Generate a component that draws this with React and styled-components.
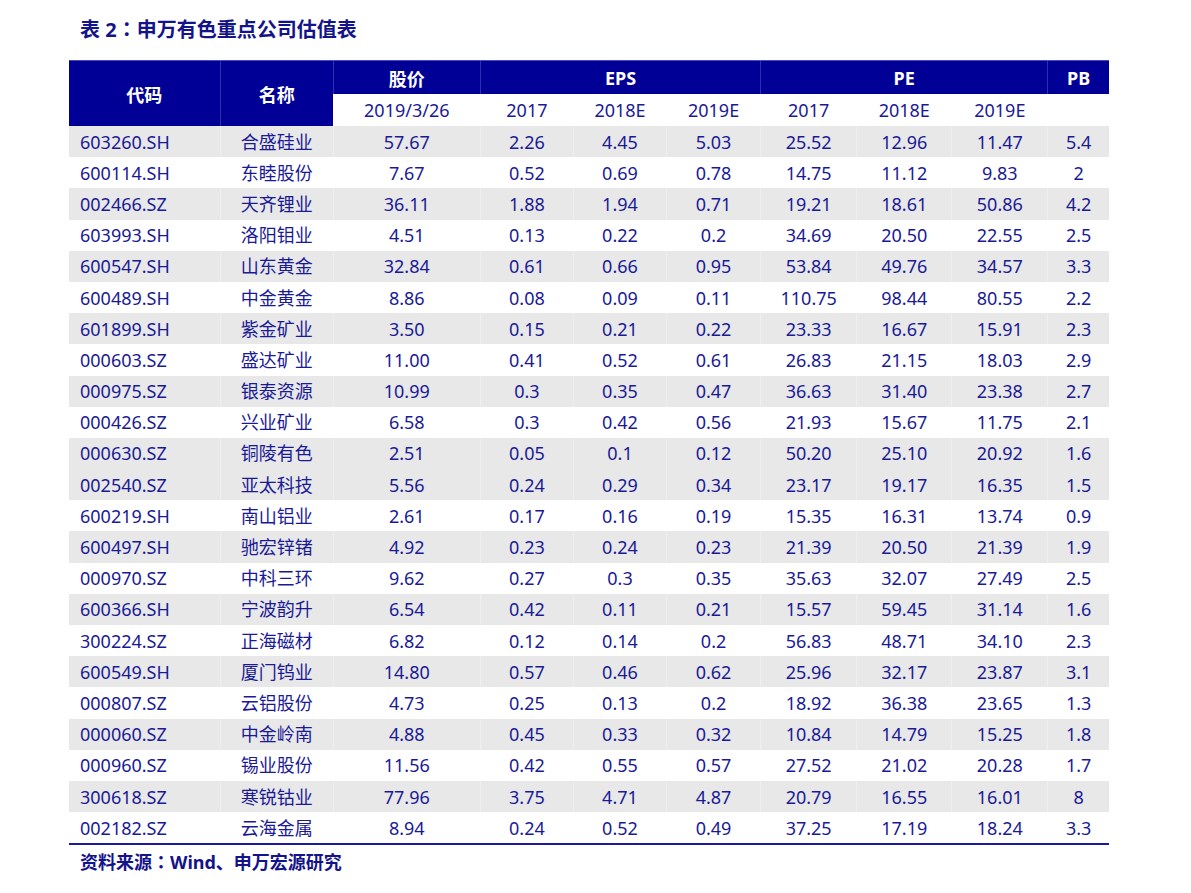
import React from 'react';
import styled, { createGlobalStyle } from 'styled-components';

const GlobalStyle = createGlobalStyle`
  html, body {
    margin: 0;
    padding: 0;
    background: #ffffff;
  }
  body {
    font-family: "Noto Sans", "Noto Sans CJK SC", sans-serif;
  }
`;

const rows = [
  ['603260.SH', '合盛硅业', '57.67', '2.26', '4.45', '5.03', '25.52', '12.96', '11.47', '5.4'],
  ['600114.SH', '东睦股份', '7.67', '0.52', '0.69', '0.78', '14.75', '11.12', '9.83', '2'],
  ['002466.SZ', '天齐锂业', '36.11', '1.88', '1.94', '0.71', '19.21', '18.61', '50.86', '4.2'],
  ['603993.SH', '洛阳钼业', '4.51', '0.13', '0.22', '0.2', '34.69', '20.50', '22.55', '2.5'],
  ['600547.SH', '山东黄金', '32.84', '0.61', '0.66', '0.95', '53.84', '49.76', '34.57', '3.3'],
  ['600489.SH', '中金黄金', '8.86', '0.08', '0.09', '0.11', '110.75', '98.44', '80.55', '2.2'],
  ['601899.SH', '紫金矿业', '3.50', '0.15', '0.21', '0.22', '23.33', '16.67', '15.91', '2.3'],
  ['000603.SZ', '盛达矿业', '11.00', '0.41', '0.52', '0.61', '26.83', '21.15', '18.03', '2.9'],
  ['000975.SZ', '银泰资源', '10.99', '0.3', '0.35', '0.47', '36.63', '31.40', '23.38', '2.7'],
  ['000426.SZ', '兴业矿业', '6.58', '0.3', '0.42', '0.56', '21.93', '15.67', '11.75', '2.1'],
  ['000630.SZ', '铜陵有色', '2.51', '0.05', '0.1', '0.12', '50.20', '25.10', '20.92', '1.6'],
  ['002540.SZ', '亚太科技', '5.56', '0.24', '0.29', '0.34', '23.17', '19.17', '16.35', '1.5'],
  ['600219.SH', '南山铝业', '2.61', '0.17', '0.16', '0.19', '15.35', '16.31', '13.74', '0.9'],
  ['600497.SH', '驰宏锌锗', '4.92', '0.23', '0.24', '0.23', '21.39', '20.50', '21.39', '1.9'],
  ['000970.SZ', '中科三环', '9.62', '0.27', '0.3', '0.35', '35.63', '32.07', '27.49', '2.5'],
  ['600366.SH', '宁波韵升', '6.54', '0.42', '0.11', '0.21', '15.57', '59.45', '31.14', '1.6'],
  ['300224.SZ', '正海磁材', '6.82', '0.12', '0.14', '0.2', '56.83', '48.71', '34.10', '2.3'],
  ['600549.SH', '厦门钨业', '14.80', '0.57', '0.46', '0.62', '25.96', '32.17', '23.87', '3.1'],
  ['000807.SZ', '云铝股份', '4.73', '0.25', '0.13', '0.2', '18.92', '36.38', '23.65', '1.3'],
  ['000060.SZ', '中金岭南', '4.88', '0.45', '0.33', '0.32', '10.84', '14.79', '15.25', '1.8'],
  ['000960.SZ', '锡业股份', '11.56', '0.42', '0.55', '0.57', '27.52', '21.02', '20.28', '1.7'],
  ['300618.SZ', '寒锐钴业', '77.96', '3.75', '4.71', '4.87', '20.79', '16.55', '16.01', '8'],
  ['002182.SZ', '云海金属', '8.94', '0.24', '0.52', '0.49', '37.25', '17.19', '18.24', '3.3'],
];

const colWidths = [151, 113, 147, 93, 93, 94, 96, 95, 96, 61];

// the source sheet's banding slips once, after 铜陵有色
const isShaded = i => (i <= 10 ? i % 2 === 0 : i % 2 === 1);

const Page = styled.div`
  padding: 16px 0 0 69px;
  width: 1040px;
`;

const Title = styled.h1`
  margin: 0 0 16px 11px;
  height: 28px;
  font-size: 20px;
  line-height: 28px;
  font-weight: 700;
  color: #14148a;
`;

const Colon = styled.span`
  font-family: "Noto Sans CJK TC", sans-serif;
  line-height: 0;
`;

const Table = styled.table`
  width: 1040px;
  border-collapse: collapse;
  table-layout: fixed;
  border-bottom: 2px solid #1a1aa0;
`;

const HeadCell = styled.th`
  background: #000096;
  color: #ffffff;
  font-size: 18px;
  font-weight: 700;
  text-align: center;
  padding: 0;
  height: 33px;
  border-left: 1px solid #2f2fb0;
  border-top: 1px solid #4a4ab8;
  &:first-child {
    border-left: none;
  }
`;

const SubCell = styled.th`
  background: #ffffff;
  color: #1a1a96;
  font-size: 18px;
  font-weight: 400;
  text-align: center;
  padding: 0;
  height: 32px;
`;

const Row = styled.tr`
  background: ${p => (p.$shade ? '#e8e8e8' : '#ffffff')};
`;

const Cell = styled.td`
  height: 31.2px;
  padding: 0;
  padding-left: ${p => (p.$left ? '11px' : '0')};
  text-align: ${p => (p.$left ? 'left' : 'center')};
  font-size: 18px;
  line-height: 20px;
  color: #1a1a96;
  white-space: nowrap;
  border-left: 1px solid rgba(255, 255, 255, 0.3);
  &:first-child {
    border-left: none;
  }
`;

const Source = styled.p`
  margin: 4px 0 0 11px;
  height: 26px;
  font-size: 18px;
  line-height: 26px;
  font-weight: 700;
  color: #14148a;
`;

export default function App() {
  return (
    <>
      <GlobalStyle />
      <Page>
        <Title>
          表 2<Colon>：</Colon>申万有色重点公司估值表
        </Title>
        <Table>
          <colgroup>
            {colWidths.map((w, i) => (
              <col key={i} style={{ width: w }} />
            ))}
          </colgroup>
          <thead>
            <tr>
              <HeadCell rowSpan={2}>代码</HeadCell>
              <HeadCell rowSpan={2}>名称</HeadCell>
              <HeadCell>股价</HeadCell>
              <HeadCell colSpan={3}>EPS</HeadCell>
              <HeadCell colSpan={3}>PE</HeadCell>
              <HeadCell>PB</HeadCell>
            </tr>
            <tr>
              <SubCell>2019/3/26</SubCell>
              <SubCell>2017</SubCell>
              <SubCell>2018E</SubCell>
              <SubCell>2019E</SubCell>
              <SubCell>2017</SubCell>
              <SubCell>2018E</SubCell>
              <SubCell>2019E</SubCell>
              <SubCell />
            </tr>
          </thead>
          <tbody>
            {rows.map((r, i) => (
              <Row key={r[0]} $shade={isShaded(i)}>
                {r.map((v, j) => (
                  <Cell key={j} $left={j === 0}>
                    {v}
                  </Cell>
                ))}
              </Row>
            ))}
          </tbody>
        </Table>
        <Source>
          资料来源<Colon>：</Colon>Wind、申万宏源研究
        </Source>
      </Page>
    </>
  );
}
